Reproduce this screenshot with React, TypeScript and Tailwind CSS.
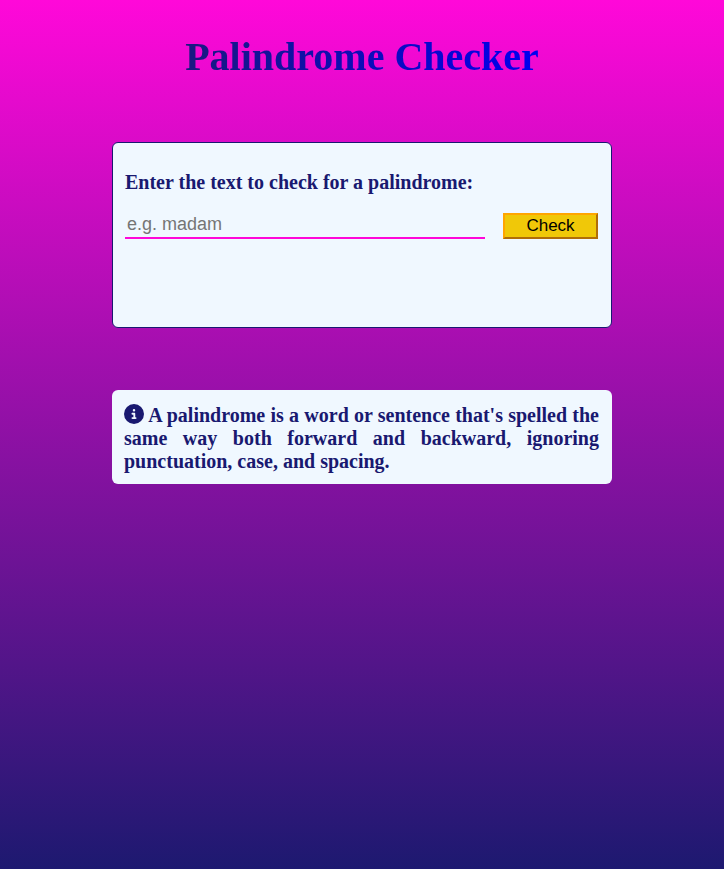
import { useState, type FormEvent } from "react";
import { FaCircleInfo } from "react-icons/fa6";

export default function App() {
  const [text, setText] = useState("");
  const [result, setResult] = useState("");

  const check = (event: FormEvent) => {
    event.preventDefault();
    const cleaned = text.toLowerCase().replace(/[^a-z0-9]/g, "");
    const reversed = [...cleaned].reverse().join("");
    setResult(cleaned === reversed ? "Palindrome" : "Not a palindrome");
  };

  return (
    <main className="flex min-h-screen flex-col items-center bg-[linear-gradient(#ff08d9,#1d1970)] px-4 pt-8 font-['Liberation_Serif',serif] font-bold text-[#191970]">
      <h1 className="bg-[linear-gradient(to_right,#191980,#0000f0)] bg-clip-text text-[40px] leading-[50px] text-transparent">
        Palindrome Checker
      </h1>

      <form
        onSubmit={check}
        className="mt-[60px] min-h-[186px] w-full max-w-[500px] rounded-md border border-[#191970] bg-[#f0f8ff] px-3 pt-7"
      >
        <label htmlFor="text-input" className="block text-[20px] leading-[23px]">
          Enter the text to check for a palindrome:
        </label>
        <div className="mt-[17px] flex items-end gap-[18px] pr-px">
          <input
            id="text-input"
            type="text"
            value={text}
            onChange={(event) => setText(event.target.value)}
            placeholder="e.g. madam"
            className="h-7 min-w-0 flex-1 border-b-2 border-[#ff08d9] bg-transparent px-0.5 font-['Liberation_Sans',sans-serif] text-[18px] font-normal outline-none placeholder:text-[#757575]"
          />
          <button
            type="submit"
            className="h-[26px] w-[95px] border-2 border-[#ffa500] border-r-[#b06d08] border-b-[#b06d08] bg-[#f0c808] font-['Liberation_Sans',sans-serif] text-[17px] leading-5 font-normal text-black"
          >
            Check
          </button>
        </div>
        <output className="mt-4 block text-center text-[20px] leading-6">{result}</output>
      </form>

      <p className="mt-[62px] w-full max-w-[500px] rounded-md bg-[#f0f8ff] pt-[14px] pr-[13px] pb-[11px] pl-3 text-justify text-[20px] leading-[23px]">
        <FaCircleInfo className="inline-block size-5 align-[-2px]" aria-hidden="true" /> A palindrome
        is a word or sentence that's spelled the same way both forward and backward, ignoring
        punctuation, case, and spacing.
      </p>
    </main>
  );
}
